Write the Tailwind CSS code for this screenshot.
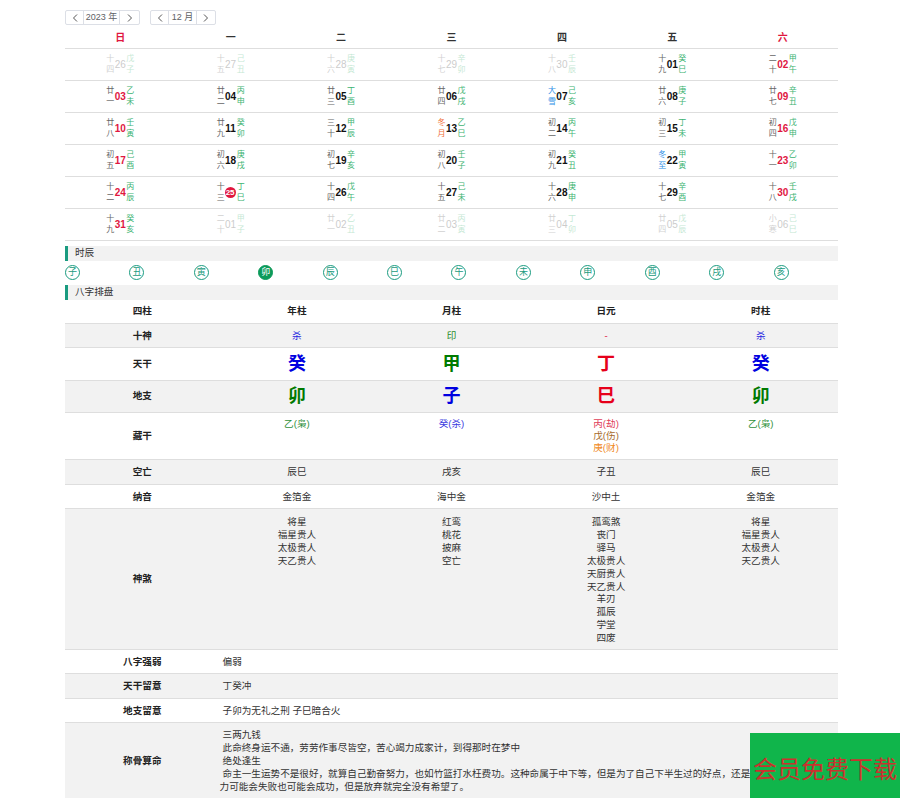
<!DOCTYPE html>
<html lang="zh">
<head>
<meta charset="utf-8">
<title>八字排盘</title>
<script src="https://cdn.jsdelivr.net/npm/@tailwindcss/browser@4"></script>
</head>
<body class="h-[798px] overflow-hidden bg-white text-[#333] [font-family:'Liberation_Sans','Noto_Sans_CJK_SC',sans-serif]">
<div class="relative h-[798px] overflow-hidden">
<div class="ml-[65px] w-[773px] pt-[10px]">

  <!-- year / month -->
  <div class="flex gap-[10px] text-[9px] text-[#606266]">
    <div class="flex h-[15px] items-center rounded-[2px] border border-[#dcdfe6]">
      <span class="flex h-full w-[18px] items-center justify-center border-r border-[#dcdfe6]"><svg width="6" height="8" viewBox="0 0 6 8" fill="none" stroke="#555" stroke-width="1"><path d="M5 0.5 1.5 4 5 7.5"/></svg></span>
      <span class="flex h-full w-[36px] items-center justify-center border-r border-[#dcdfe6]">2023 年</span>
      <span class="flex h-full w-[19px] items-center justify-center"><svg width="6" height="8" viewBox="0 0 6 8" fill="none" stroke="#555" stroke-width="1"><path d="M1 0.5 4.5 4 1 7.5"/></svg></span>
    </div>
    <div class="flex h-[15px] items-center rounded-[2px] border border-[#dcdfe6]">
      <span class="flex h-full w-[18px] items-center justify-center border-r border-[#dcdfe6]"><svg width="6" height="8" viewBox="0 0 6 8" fill="none" stroke="#555" stroke-width="1"><path d="M5 0.5 1.5 4 5 7.5"/></svg></span>
      <span class="flex h-full w-[28px] items-center justify-center border-r border-[#dcdfe6]">12 月</span>
      <span class="flex h-full w-[18px] items-center justify-center"><svg width="6" height="8" viewBox="0 0 6 8" fill="none" stroke="#555" stroke-width="1"><path d="M1 0.5 4.5 4 1 7.5"/></svg></span>
    </div>
  </div>

  <!-- calendar -->
  <table class="mt-[2px] w-full table-fixed border-collapse">
    <thead>
      <tr class="h-[21px] border-b border-[#dedede] text-[10px] font-bold">
        <th class="text-[#e0173f]">日</th><th>一</th><th>二</th><th>三</th><th>四</th><th>五</th><th class="text-[#e0173f]">六</th>
      </tr>
    </thead>
    <tbody class="text-center">
      <tr class="h-8 border-b border-[#dedede]">
        <td><div class="flex items-center justify-center pt-px opacity-30"><span class="w-2 text-[8px] leading-[10.5px] text-[#666]">十<br>四</span><b class="w-[12px] text-[10px] font-normal text-[#555]">26</b><span class="w-2 text-[8px] leading-[10.5px] text-[#3cb371]">戊<br>子</span></div></td>
        <td><div class="flex items-center justify-center pt-px opacity-30"><span class="w-2 text-[8px] leading-[10.5px] text-[#666]">十<br>五</span><b class="w-[12px] text-[10px] font-normal text-[#555]">27</b><span class="w-2 text-[8px] leading-[10.5px] text-[#3cb371]">己<br>丑</span></div></td>
        <td><div class="flex items-center justify-center pt-px opacity-30"><span class="w-2 text-[8px] leading-[10.5px] text-[#666]">十<br>六</span><b class="w-[12px] text-[10px] font-normal text-[#555]">28</b><span class="w-2 text-[8px] leading-[10.5px] text-[#3cb371]">庚<br>寅</span></div></td>
        <td><div class="flex items-center justify-center pt-px opacity-30"><span class="w-2 text-[8px] leading-[10.5px] text-[#666]">十<br>七</span><b class="w-[12px] text-[10px] font-normal text-[#555]">29</b><span class="w-2 text-[8px] leading-[10.5px] text-[#3cb371]">辛<br>卯</span></div></td>
        <td><div class="flex items-center justify-center pt-px opacity-30"><span class="w-2 text-[8px] leading-[10.5px] text-[#666]">十<br>八</span><b class="w-[12px] text-[10px] font-normal text-[#555]">30</b><span class="w-2 text-[8px] leading-[10.5px] text-[#3cb371]">壬<br>辰</span></div></td>
        <td><div class="flex items-center justify-center pt-px"><span class="w-2 text-[8px] leading-[10.5px] text-[#666]">十<br>九</span><b class="w-[12px] text-[10px] text-[#111]">01</b><span class="w-2 text-[8px] leading-[10.5px] text-[#3cb371]">癸<br>巳</span></div></td>
        <td><div class="flex items-center justify-center pt-px"><span class="w-2 text-[8px] leading-[10.5px] text-[#666]">二<br>十</span><b class="w-[12px] text-[10px] text-[#e0173f]">02</b><span class="w-2 text-[8px] leading-[10.5px] text-[#3cb371]">甲<br>午</span></div></td>
      </tr>
      <tr class="h-8 border-b border-[#dedede]">
        <td><div class="flex items-center justify-center pt-px"><span class="w-2 text-[8px] leading-[10.5px] text-[#666]">廿<br>一</span><b class="w-[12px] text-[10px] text-[#e0173f]">03</b><span class="w-2 text-[8px] leading-[10.5px] text-[#3cb371]">乙<br>未</span></div></td>
        <td><div class="flex items-center justify-center pt-px"><span class="w-2 text-[8px] leading-[10.5px] text-[#666]">廿<br>二</span><b class="w-[12px] text-[10px] text-[#111]">04</b><span class="w-2 text-[8px] leading-[10.5px] text-[#3cb371]">丙<br>申</span></div></td>
        <td><div class="flex items-center justify-center pt-px"><span class="w-2 text-[8px] leading-[10.5px] text-[#666]">廿<br>三</span><b class="w-[12px] text-[10px] text-[#111]">05</b><span class="w-2 text-[8px] leading-[10.5px] text-[#3cb371]">丁<br>酉</span></div></td>
        <td><div class="flex items-center justify-center pt-px"><span class="w-2 text-[8px] leading-[10.5px] text-[#666]">廿<br>四</span><b class="w-[12px] text-[10px] text-[#111]">06</b><span class="w-2 text-[8px] leading-[10.5px] text-[#3cb371]">戊<br>戌</span></div></td>
        <td><div class="flex items-center justify-center pt-px"><span class="w-2 text-[8px] leading-[10.5px] text-[#2e8fe6]">大<br>雪</span><b class="w-[12px] text-[10px] text-[#111]">07</b><span class="w-2 text-[8px] leading-[10.5px] text-[#3cb371]">己<br>亥</span></div></td>
        <td><div class="flex items-center justify-center pt-px"><span class="w-2 text-[8px] leading-[10.5px] text-[#666]">廿<br>六</span><b class="w-[12px] text-[10px] text-[#111]">08</b><span class="w-2 text-[8px] leading-[10.5px] text-[#3cb371]">庚<br>子</span></div></td>
        <td><div class="flex items-center justify-center pt-px"><span class="w-2 text-[8px] leading-[10.5px] text-[#666]">廿<br>七</span><b class="w-[12px] text-[10px] text-[#e0173f]">09</b><span class="w-2 text-[8px] leading-[10.5px] text-[#3cb371]">辛<br>丑</span></div></td>
      </tr>
      <tr class="h-8 border-b border-[#dedede]">
        <td><div class="flex items-center justify-center pt-px"><span class="w-2 text-[8px] leading-[10.5px] text-[#666]">廿<br>八</span><b class="w-[12px] text-[10px] text-[#e0173f]">10</b><span class="w-2 text-[8px] leading-[10.5px] text-[#3cb371]">壬<br>寅</span></div></td>
        <td><div class="flex items-center justify-center pt-px"><span class="w-2 text-[8px] leading-[10.5px] text-[#666]">廿<br>九</span><b class="w-[12px] text-[10px] text-[#111]">11</b><span class="w-2 text-[8px] leading-[10.5px] text-[#3cb371]">癸<br>卯</span></div></td>
        <td><div class="flex items-center justify-center pt-px"><span class="w-2 text-[8px] leading-[10.5px] text-[#666]">三<br>十</span><b class="w-[12px] text-[10px] text-[#111]">12</b><span class="w-2 text-[8px] leading-[10.5px] text-[#3cb371]">甲<br>辰</span></div></td>
        <td><div class="flex items-center justify-center pt-px"><span class="w-2 text-[8px] leading-[10.5px] text-[#f0703a]">冬<br>月</span><b class="w-[12px] text-[10px] text-[#111]">13</b><span class="w-2 text-[8px] leading-[10.5px] text-[#3cb371]">乙<br>巳</span></div></td>
        <td><div class="flex items-center justify-center pt-px"><span class="w-2 text-[8px] leading-[10.5px] text-[#666]">初<br>二</span><b class="w-[12px] text-[10px] text-[#111]">14</b><span class="w-2 text-[8px] leading-[10.5px] text-[#3cb371]">丙<br>午</span></div></td>
        <td><div class="flex items-center justify-center pt-px"><span class="w-2 text-[8px] leading-[10.5px] text-[#666]">初<br>三</span><b class="w-[12px] text-[10px] text-[#111]">15</b><span class="w-2 text-[8px] leading-[10.5px] text-[#3cb371]">丁<br>未</span></div></td>
        <td><div class="flex items-center justify-center pt-px"><span class="w-2 text-[8px] leading-[10.5px] text-[#666]">初<br>四</span><b class="w-[12px] text-[10px] text-[#e0173f]">16</b><span class="w-2 text-[8px] leading-[10.5px] text-[#3cb371]">戊<br>申</span></div></td>
      </tr>
      <tr class="h-8 border-b border-[#dedede]">
        <td><div class="flex items-center justify-center pt-px"><span class="w-2 text-[8px] leading-[10.5px] text-[#666]">初<br>五</span><b class="w-[12px] text-[10px] text-[#e0173f]">17</b><span class="w-2 text-[8px] leading-[10.5px] text-[#3cb371]">己<br>酉</span></div></td>
        <td><div class="flex items-center justify-center pt-px"><span class="w-2 text-[8px] leading-[10.5px] text-[#666]">初<br>六</span><b class="w-[12px] text-[10px] text-[#111]">18</b><span class="w-2 text-[8px] leading-[10.5px] text-[#3cb371]">庚<br>戌</span></div></td>
        <td><div class="flex items-center justify-center pt-px"><span class="w-2 text-[8px] leading-[10.5px] text-[#666]">初<br>七</span><b class="w-[12px] text-[10px] text-[#111]">19</b><span class="w-2 text-[8px] leading-[10.5px] text-[#3cb371]">辛<br>亥</span></div></td>
        <td><div class="flex items-center justify-center pt-px"><span class="w-2 text-[8px] leading-[10.5px] text-[#666]">初<br>八</span><b class="w-[12px] text-[10px] text-[#111]">20</b><span class="w-2 text-[8px] leading-[10.5px] text-[#3cb371]">壬<br>子</span></div></td>
        <td><div class="flex items-center justify-center pt-px"><span class="w-2 text-[8px] leading-[10.5px] text-[#666]">初<br>九</span><b class="w-[12px] text-[10px] text-[#111]">21</b><span class="w-2 text-[8px] leading-[10.5px] text-[#3cb371]">癸<br>丑</span></div></td>
        <td><div class="flex items-center justify-center pt-px"><span class="w-2 text-[8px] leading-[10.5px] text-[#2e8fe6]">冬<br>至</span><b class="w-[12px] text-[10px] text-[#111]">22</b><span class="w-2 text-[8px] leading-[10.5px] text-[#3cb371]">甲<br>寅</span></div></td>
        <td><div class="flex items-center justify-center pt-px"><span class="w-2 text-[8px] leading-[10.5px] text-[#666]">十<br>一</span><b class="w-[12px] text-[10px] text-[#e0173f]">23</b><span class="w-2 text-[8px] leading-[10.5px] text-[#3cb371]">乙<br>卯</span></div></td>
      </tr>
      <tr class="h-8 border-b border-[#dedede]">
        <td><div class="flex items-center justify-center pt-px"><span class="w-2 text-[8px] leading-[10.5px] text-[#666]">十<br>二</span><b class="w-[12px] text-[10px] text-[#e0173f]">24</b><span class="w-2 text-[8px] leading-[10.5px] text-[#3cb371]">丙<br>辰</span></div></td>
        <td><div class="flex items-center justify-center pt-px"><span class="w-2 text-[8px] leading-[10.5px] text-[#666]">十<br>三</span><b class="flex h-[11px] w-[11px] items-center justify-center rounded-full bg-[#e0173f] text-[8px] text-white">25</b><span class="ml-px w-2 text-[8px] leading-[10.5px] text-[#3cb371]">丁<br>巳</span></div></td>
        <td><div class="flex items-center justify-center pt-px"><span class="w-2 text-[8px] leading-[10.5px] text-[#666]">十<br>四</span><b class="w-[12px] text-[10px] text-[#111]">26</b><span class="w-2 text-[8px] leading-[10.5px] text-[#3cb371]">戊<br>午</span></div></td>
        <td><div class="flex items-center justify-center pt-px"><span class="w-2 text-[8px] leading-[10.5px] text-[#666]">十<br>五</span><b class="w-[12px] text-[10px] text-[#111]">27</b><span class="w-2 text-[8px] leading-[10.5px] text-[#3cb371]">己<br>未</span></div></td>
        <td><div class="flex items-center justify-center pt-px"><span class="w-2 text-[8px] leading-[10.5px] text-[#666]">十<br>六</span><b class="w-[12px] text-[10px] text-[#111]">28</b><span class="w-2 text-[8px] leading-[10.5px] text-[#3cb371]">庚<br>申</span></div></td>
        <td><div class="flex items-center justify-center pt-px"><span class="w-2 text-[8px] leading-[10.5px] text-[#666]">十<br>七</span><b class="w-[12px] text-[10px] text-[#111]">29</b><span class="w-2 text-[8px] leading-[10.5px] text-[#3cb371]">辛<br>酉</span></div></td>
        <td><div class="flex items-center justify-center pt-px"><span class="w-2 text-[8px] leading-[10.5px] text-[#666]">十<br>八</span><b class="w-[12px] text-[10px] text-[#e0173f]">30</b><span class="w-2 text-[8px] leading-[10.5px] text-[#3cb371]">壬<br>戌</span></div></td>
      </tr>
      <tr class="h-8 border-b border-[#dedede]">
        <td><div class="flex items-center justify-center pt-px"><span class="w-2 text-[8px] leading-[10.5px] text-[#666]">十<br>九</span><b class="w-[12px] text-[10px] text-[#e0173f]">31</b><span class="w-2 text-[8px] leading-[10.5px] text-[#3cb371]">癸<br>亥</span></div></td>
        <td><div class="flex items-center justify-center pt-px opacity-30"><span class="w-2 text-[8px] leading-[10.5px] text-[#666]">二<br>十</span><b class="w-[12px] text-[10px] font-normal text-[#555]">01</b><span class="w-2 text-[8px] leading-[10.5px] text-[#3cb371]">甲<br>子</span></div></td>
        <td><div class="flex items-center justify-center pt-px opacity-30"><span class="w-2 text-[8px] leading-[10.5px] text-[#666]">廿<br>一</span><b class="w-[12px] text-[10px] font-normal text-[#555]">02</b><span class="w-2 text-[8px] leading-[10.5px] text-[#3cb371]">乙<br>丑</span></div></td>
        <td><div class="flex items-center justify-center pt-px opacity-30"><span class="w-2 text-[8px] leading-[10.5px] text-[#666]">廿<br>二</span><b class="w-[12px] text-[10px] font-normal text-[#555]">03</b><span class="w-2 text-[8px] leading-[10.5px] text-[#3cb371]">丙<br>寅</span></div></td>
        <td><div class="flex items-center justify-center pt-px opacity-30"><span class="w-2 text-[8px] leading-[10.5px] text-[#666]">廿<br>三</span><b class="w-[12px] text-[10px] font-normal text-[#555]">04</b><span class="w-2 text-[8px] leading-[10.5px] text-[#3cb371]">丁<br>卯</span></div></td>
        <td><div class="flex items-center justify-center pt-px opacity-30"><span class="w-2 text-[8px] leading-[10.5px] text-[#666]">廿<br>四</span><b class="w-[12px] text-[10px] font-normal text-[#555]">05</b><span class="w-2 text-[8px] leading-[10.5px] text-[#3cb371]">戊<br>辰</span></div></td>
        <td><div class="flex items-center justify-center pt-px opacity-30"><span class="w-2 text-[8px] leading-[10.5px] text-[#666]">小<br>寒</span><b class="w-[12px] text-[10px] font-normal text-[#555]">06</b><span class="w-2 text-[8px] leading-[10.5px] text-[#3cb371]">己<br>巳</span></div></td>
      </tr>
    </tbody>
  </table>

  <!-- 时辰 -->
  <div class="mt-[5px] flex h-[15px] items-center border-l-[3px] border-[#1a9b80] bg-[#f2f2f2] pl-[7px] text-[9.6px]">时辰</div>
  <div class="grid h-[24px] grid-cols-12 items-center text-[9px] text-[#1a9b80]">
    <span class="flex h-[15px] w-[15px] items-center justify-center rounded-full border border-[#1a9b80]">子</span>
    <span class="flex h-[15px] w-[15px] items-center justify-center rounded-full border border-[#1a9b80]">丑</span>
    <span class="flex h-[15px] w-[15px] items-center justify-center rounded-full border border-[#1a9b80]">寅</span>
    <span class="flex h-[15px] w-[15px] items-center justify-center rounded-full border border-[#0b9a5a] bg-[#0b9a5a] text-white">卯</span>
    <span class="flex h-[15px] w-[15px] items-center justify-center rounded-full border border-[#1a9b80]">辰</span>
    <span class="flex h-[15px] w-[15px] items-center justify-center rounded-full border border-[#1a9b80]">巳</span>
    <span class="flex h-[15px] w-[15px] items-center justify-center rounded-full border border-[#1a9b80]">午</span>
    <span class="flex h-[15px] w-[15px] items-center justify-center rounded-full border border-[#1a9b80]">未</span>
    <span class="flex h-[15px] w-[15px] items-center justify-center rounded-full border border-[#1a9b80]">申</span>
    <span class="flex h-[15px] w-[15px] items-center justify-center rounded-full border border-[#1a9b80]">酉</span>
    <span class="flex h-[15px] w-[15px] items-center justify-center rounded-full border border-[#1a9b80]">戌</span>
    <span class="flex h-[15px] w-[15px] items-center justify-center rounded-full border border-[#1a9b80]">亥</span>
  </div>

  <!-- 八字排盘 -->
  <div class="flex h-[15px] items-center border-l-[3px] border-[#1a9b80] bg-[#f2f2f2] pl-[7px] text-[9.6px]">八字排盘</div>
  <table class="w-full table-fixed border-collapse text-center text-[9.6px] leading-[12.9px]">
    <tbody>
      <tr class="h-[24px] border-b border-[#dedede] font-bold text-[#222]">
        <td>四柱</td><td>年柱</td><td>月柱</td><td>日元</td><td>时柱</td>
      </tr>
      <tr class="h-[24px] border-b border-[#dedede] bg-[#f2f2f2]">
        <td class="pt-px font-bold text-[#222]">十神</td><td class="pt-px text-[#2323e0]">杀</td><td class="pt-px text-[#1f8a1f]">印</td><td class="pt-px text-[#e0173f]">-</td><td class="pt-px text-[#2323e0]">杀</td>
      </tr>
      <tr class="h-[33px] border-b border-[#dedede] text-[18px] font-bold">
        <td class="text-[9.6px] text-[#222]">天干</td><td class="text-[#0000e0]">癸</td><td class="text-[#007a00]">甲</td><td class="text-[#e6001a]">丁</td><td class="text-[#0000e0]">癸</td>
      </tr>
      <tr class="h-[32px] border-b border-[#dedede] bg-[#f2f2f2] text-[18px] font-bold">
        <td class="text-[9.6px] text-[#222]">地支</td><td class="text-[#007a00]">卯</td><td class="text-[#0000e0]">子</td><td class="text-[#e6001a]">巳</td><td class="text-[#007a00]">卯</td>
      </tr>
      <tr class="h-[47px] border-b border-[#dedede]">
        <td class="font-bold text-[#222]">藏干</td>
        <td class="pt-[5px] align-top text-[#2f8f3a]">乙(枭)</td>
        <td class="pt-[5px] align-top text-[#3a3ae0]">癸(杀)</td>
        <td class="pt-[5px] align-top leading-[12px]"><span class="block text-[#e0405a]">丙(劫)</span><span class="block text-[#a5682a]">戊(伤)</span><span class="block text-[#f08a24]">庚(财)</span></td>
        <td class="pt-[5px] align-top text-[#2f8f3a]">乙(枭)</td>
      </tr>
      <tr class="h-[25px] border-b border-[#dedede] bg-[#f2f2f2]">
        <td class="pt-px font-bold text-[#222]">空亡</td><td class="pt-px">辰巳</td><td class="pt-px">戌亥</td><td class="pt-px">子丑</td><td class="pt-px">辰巳</td>
      </tr>
      <tr class="h-[24px] border-b border-[#dedede]">
        <td class="pt-px font-bold text-[#222]">纳音</td><td class="pt-px">金箔金</td><td class="pt-px">海中金</td><td class="pt-px">沙中土</td><td class="pt-px">金箔金</td>
      </tr>
      <tr class="h-[141px] border-b border-[#dedede] bg-[#f2f2f2]">
        <td class="font-bold text-[#222]">神煞</td>
        <td class="pt-[7px] align-top">将星<br>福星贵人<br>太极贵人<br>天乙贵人</td>
        <td class="pt-[7px] align-top">红鸾<br>桃花<br>披麻<br>空亡</td>
        <td class="pt-[7px] align-top">孤鸾煞<br>丧门<br>驿马<br>太极贵人<br>天厨贵人<br>天乙贵人<br>羊刃<br>孤辰<br>学堂<br>四废</td>
        <td class="pt-[7px] align-top">将星<br>福星贵人<br>太极贵人<br>天乙贵人</td>
      </tr>
      <tr class="h-[24px] border-b border-[#dedede]">
        <td class="pt-px font-bold text-[#222]">八字强弱</td><td colspan="4" class="pt-px pl-[3px] text-left">偏弱</td>
      </tr>
      <tr class="h-[25px] border-b border-[#dedede] bg-[#f2f2f2]">
        <td class="font-bold text-[#222]">天干留意</td><td colspan="4" class="pl-[3px] text-left">丁癸冲</td>
      </tr>
      <tr class="h-[24px] border-b border-[#dedede]">
        <td class="pt-px font-bold text-[#222]">地支留意</td><td colspan="4" class="pt-px pl-[3px] text-left">子卯为无礼之刑 子巳暗合火</td>
      </tr>
      <tr class="h-[76px] bg-[#f2f2f2]">
        <td class="pt-px font-bold text-[#222]">称骨算命</td>
        <td colspan="4" class="pt-[6px] text-left align-top">
          <p class="indent-[3px]">三两九钱</p>
          <p class="indent-[3px]">此命终身运不通，劳劳作事尽皆空，苦心竭力成家计，到得那时在梦中</p>
          <p class="indent-[3px]">绝处逢生</p>
          <p class="indent-[3px]">命主一生运势不是很好，就算自己勤奋努力，也如竹篮打水枉费功。这种命属于中下等，但是为了自己下半生过的好点，还是努力去拼一拼吧，努力可能会失败也可能会成功，但是放弃就完全没有希望了。</p>
        </td>
      </tr>
    </tbody>
  </table>
</div>

<!-- floating download box -->
<div class="absolute right-0 bottom-0 flex h-[65px] w-[150px] items-center justify-center bg-[#10b54b] pt-2 text-[24px] whitespace-nowrap text-[#c9322e]">会员免费下载</div>
</div>
</body>
</html>
